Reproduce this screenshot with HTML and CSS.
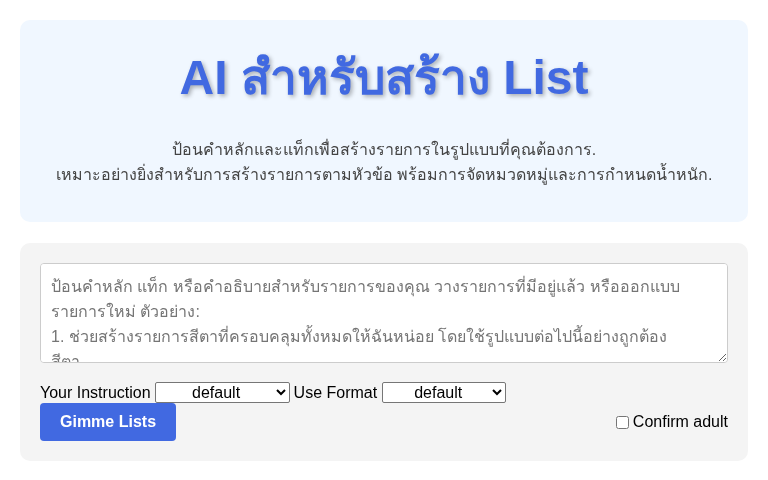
FILE: index.html
```html
<!DOCTYPE html>
<html lang="th">
<head>
<meta charset="utf-8">
<title>AI สำหรับสร้าง List</title>
<link rel="stylesheet" href="styles.css">
</head>
<body>
<div class="page">
  <header class="hero">
    <h1 class="title">AI สำหรับสร้าง List</h1>
    <p class="lead">ป้อนคำหลักและแท็กเพื่อสร้างรายการในรูปแบบที่คุณต้องการ.<br>เหมาะอย่างยิ่งสำหรับการสร้างรายการตามหัวข้อ พร้อมการจัดหมวดหมู่และการกำหนดน้ำหนัก.</p>
  </header>
  <section class="panel">
    <textarea class="prompt" placeholder="ป้อนคำหลัก แท็ก หรือคำอธิบายสำหรับรายการของคุณ วางรายการที่มีอยู่แล้ว หรือออกแบบรายการใหม่ ตัวอย่าง:
1. ช่วยสร้างรายการสีตาที่ครอบคลุมทั้งหมดให้ฉันหน่อย โดยใช้รูปแบบต่อไปนี้อย่างถูกต้อง
สีตา"></textarea>
    <div class="options">
      <label class="opt-label">Your Instruction</label>
      <select class="sel sel-instr"><option>default</option></select>
      <label class="opt-label">Use Format</label>
      <select class="sel sel-format"><option>default</option></select>
    </div>
    <div class="actions">
      <button class="go">Gimme Lists</button>
      <label class="adult"><input type="checkbox" class="chk"> Confirm adult</label>
    </div>
  </section>
</div>
</body>
</html>
```
FILE: styles.css
```css
html, body {
  margin: 0;
  padding: 0;
  background: #ffffff;
  font-family: "Liberation Sans", Arial, sans-serif;
}
.page {
  padding: 20px;
}
.hero {
  background: #f0f7ff;
  border-radius: 10px;
  padding: 20px 20px 35px;
  text-align: center;
}
.title {
  margin: 6px 0 27px;
  font-size: 48px;
  line-height: 64px;
  font-weight: bold;
  color: #4169e1;
  text-shadow: 2px 2px 4px rgba(0, 0, 0, 0.3);
}
.lead {
  margin: 0;
  font-size: 16px;
  line-height: 25px;
  color: #444;
}
.panel {
  margin-top: 21px;
  background: #f4f4f4;
  border-radius: 10px;
  padding: 20px;
}
.prompt {
  display: block;
  box-sizing: border-box;
  width: 100%;
  height: 100px;
  padding: 10px;
  border: 1px solid #ccc;
  border-radius: 4px;
  background: #fff;
  font-family: "Liberation Sans", Arial, sans-serif;
  font-size: 16px;
  line-height: 25px;
  resize: vertical;
  margin: 0 0 19px;
}
.prompt::placeholder {
  color: #757575;
}
.options {
  display: flex;
  align-items: center;
  gap: 4px;
  font-size: 16px;
  height: 21px;
}
.sel {
  font-family: "Liberation Sans", Arial, sans-serif;
  font-size: 16px;
  height: 21px;
  text-align: center;
  background: #fff;
  border: 1px solid #767676;
  border-radius: 2px;
  color: #000;
}
.sel-instr { width: 135px; }
.sel-format { width: 124px; margin-left: 1px; }
.actions {
  display: flex;
  justify-content: space-between;
  align-items: center;
}
.go {
  background: #4169e1;
  color: #fff;
  border: none;
  border-radius: 4px;
  padding: 0 20px;
  height: 38px;
  white-space: nowrap;
  font-family: "Liberation Sans", Arial, sans-serif;
  font-size: 16px;
  font-weight: bold;
}
.adult {
  font-size: 16px;
  display: flex;
  align-items: center;
  gap: 4px;
}
.chk {
  margin: 0;
  width: 13px;
  height: 13px;
}
```
